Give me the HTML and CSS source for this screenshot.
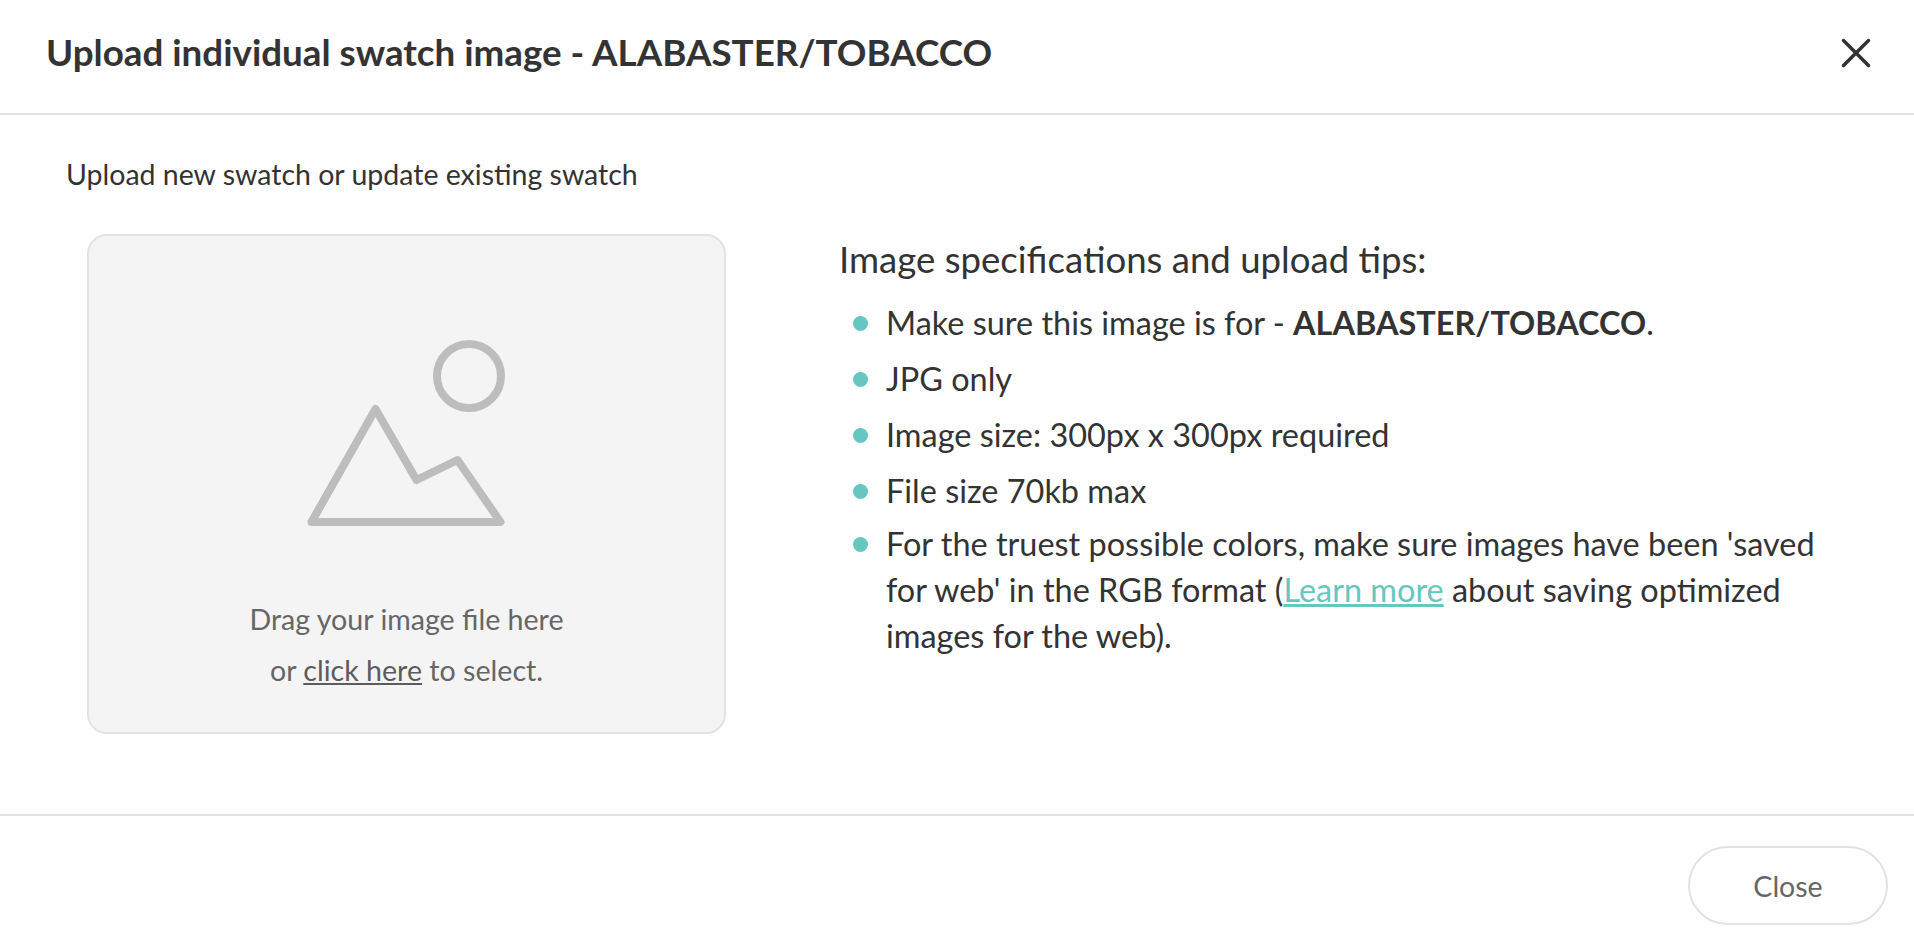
FILE: index.html
```html
<!DOCTYPE html>
<html lang="en">
<head>
<meta charset="utf-8">
<title>Upload individual swatch image</title>
<link rel="stylesheet" href="styles.css">
</head>
<body>
<div class="dialog">
  <header class="dialog-header">
    <h1 class="dialog-title">Upload individual swatch image - ALABASTER/TOBACCO</h1>
    <button class="icon-close" aria-label="Close">
      <svg width="30" height="30" viewBox="0 0 30 30"><path d="M2.5 2.5 27.5 27.5M27.5 2.5 2.5 27.5" fill="none" stroke="#333" stroke-width="3.5" stroke-linecap="round"/></svg>
    </button>
  </header>
  <main class="dialog-body">
    <p class="intro">Upload new swatch or update existing swatch</p>
    <div class="columns">
      <div class="dropzone">
        <svg class="drop-icon" width="200" height="190" viewBox="0 0 200 190">
          <circle cx="162" cy="38" r="32" fill="none" stroke="#bdbdbd" stroke-width="8"/>
          <path d="M68.500 71 109.500 142 150.500 122 193.500 184H4.500Z" fill="none" stroke="#bdbdbd" stroke-width="8" stroke-linejoin="round"/>
        </svg>
        <p class="drop-text">Drag your image file here<br>or <a class="drop-link" href="#">click here</a> to select.</p>
      </div>
      <section class="specs">
        <h2 class="specs-title">Image specifications and upload tips:</h2>
        <ul class="specs-list">
          <li>Make sure this image is for - <strong>ALABASTER/TOBACCO</strong>.</li>
          <li>JPG only</li>
          <li>Image size: 300px x 300px required</li>
          <li>File size 70kb max</li>
          <li class="specs-long">For the truest possible colors, make sure images have been 'saved for web' in the RGB format (<a class="learn" href="#">Learn more</a> about saving optimized images for the web).</li>
        </ul>
      </section>
    </div>
  </main>
  <footer class="dialog-footer">
    <button class="btn-close">Close</button>
  </footer>
</div>
</body>
</html>
```

FILE: styles.css
```css
* { box-sizing: border-box; }
html, body { margin: 0; padding: 0; background: #fff; }
body { font-family: Lato, "Liberation Sans", sans-serif; color: #333; }
.dialog { width: 1914px; height: 952px; display: flex; flex-direction: column; overflow: hidden; }
.dialog-header { height: 115px; flex: none; border-bottom: 2px solid #e3e3e3; display: flex; align-items: flex-start; justify-content: space-between; padding: 28px 43px 0 46px; }
.dialog-title { margin: 0; font-size: 36.75px; line-height: 48px; font-weight: 700; color: #333; }
.icon-close { border: 0; background: none; padding: 0; margin-top: 10px; width: 30px; height: 30px; display: block; }
.icon-close svg { display: block; }
.dialog-body { flex: 1; padding: 42px 0 0 66px; }
.intro { margin: 0; font-size: 28.5px; line-height: 34px; color: #333; }
.columns { display: flex; margin-top: 43px; padding-left: 21px; }
.dropzone { width: 639px; height: 500px; flex: none; background: #f4f4f4; border: 2px solid #e3e3e3; border-radius: 20px; display: flex; flex-direction: column; align-items: center; padding-top: 102px; }
.drop-icon { display: block; }
.drop-text { margin: 66px 0 0; font-size: 28.6px; line-height: 51px; color: #666; text-align: center; }
.drop-link { color: #5c5c5c; text-decoration: underline; }
.specs { margin-left: 113px; width: 1005px; }
.specs-title { margin: 0; font-size: 36.6px; line-height: 50px; font-weight: 400; color: #333; }
.specs-list { list-style: none; margin: 16px 0 0; padding: 0 0 0 47px; font-size: 32.45px; line-height: 46px; color: #333; }
.specs-list li { position: relative; margin-bottom: 10px; }
.specs-list li::before { content: ""; position: absolute; left: -33px; top: 16px; width: 15px; height: 15px; border-radius: 50%; background: #66c7c0; }
.specs-list .specs-long { margin-top: -3px; }
.specs-list strong { font-weight: 700; }
.learn { color: #66c7c0; text-decoration: underline; }
.dialog-footer { height: 138px; flex: none; border-top: 2px solid #e3e3e3; display: flex; justify-content: flex-end; align-items: flex-start; padding: 30px 26px 0 0; }
.btn-close { width: 200px; height: 79px; border: 2px solid #e3e3e3; border-radius: 40px; background: #fff; font-family: Lato, "Liberation Sans", sans-serif; font-size: 28.5px; color: #666; padding: 0; }
```
